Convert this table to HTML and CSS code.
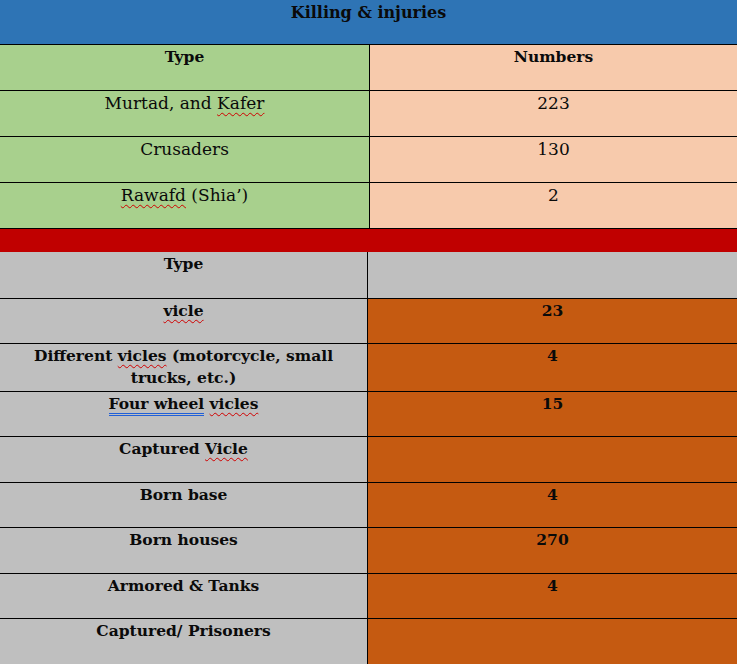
FILE: index.html
```html
<!DOCTYPE html>
<html lang="en">
<head>
<meta charset="utf-8">
<title>Killing &amp; injuries</title>
<link rel="stylesheet" href="styles.css">
</head>
<body>
<div class="sheet">
  <div class="title-row"><b>Killing &amp; injuries</b></div>

  <div class="grid top">
    <div class="cell green h45 bold">Type</div>
    <div class="cell peach h45 bold sep">Numbers</div>

    <div class="cell green h45">Murtad, and <span class="sp">Kafer</span></div>
    <div class="cell peach h45 sep">223</div>

    <div class="cell green h45">Crusaders</div>
    <div class="cell peach h45 sep">130</div>

    <div class="cell green h45"><span class="sp">Rawafd</span> (Shia’)</div>
    <div class="cell peach h45 sep">2</div>
  </div>

  <div class="red-band"></div>

  <div class="grid bottom bold">
    <div class="cell gray h46">Type</div>
    <div class="cell gray h46 sep"></div>

    <div class="cell gray h44"><span class="sp">vicle</span></div>
    <div class="cell orange h44 sep">23</div>

    <div class="cell gray h47">Different <span class="sp">vicles</span> (motorcycle, small<br>trucks, etc.)</div>
    <div class="cell orange h47 sep">4</div>

    <div class="cell gray h44"><span class="gr">Four wheel</span> <span class="sp">vicles</span></div>
    <div class="cell orange h44 sep">15</div>

    <div class="cell gray h45">Captured <span class="sp">Vicle</span></div>
    <div class="cell orange h45 sep"></div>

    <div class="cell gray h44">Born base</div>
    <div class="cell orange h44 sep">4</div>

    <div class="cell gray h45">Born houses</div>
    <div class="cell orange h45 sep">270</div>

    <div class="cell gray h44">Armored &amp; Tanks</div>
    <div class="cell orange h44 sep">4</div>

    <div class="cell gray h45 last">Captured/ Prisoners</div>
    <div class="cell orange h45 sep last"></div>
  </div>
</div>
</body>
</html>
```

FILE: styles.css
```css
html, body {
  margin: 0;
  padding: 0;
  background: #ffffff;
}

.sheet {
  width: 737px;
  height: 664px;
  overflow: hidden;
  font-family: "DejaVu Serif", "Liberation Serif", serif;
  font-size: 17px;
  line-height: 22px;
  color: #0a0a0a;
}

.title-row {
  height: 45px;
  box-sizing: border-box;
  padding-top: 1px;
  background: #2e74b5;
  border-bottom: 1px solid #000;
  text-align: center;
}

.grid {
  display: grid;
}

.top {
  grid-template-columns: 369px 1fr;
}

.bottom {
  grid-template-columns: 367px 1fr;
}

.bold,
.title-row b {
  font-weight: bold;
  font-size: 15.5px;
}

.title-row b {
  font-size: 16px;
}

.cell {
  text-align: center;
  padding-top: 1px;
  box-sizing: content-box;
  border-bottom: 1px solid #000;
}

.cell.last {
  border-bottom: none;
}

.sep {
  border-left: 1px solid #000;
}

.h44 { height: 43px; }
.h45 { height: 44px; }
.h46 { height: 45px; }
.h47 { height: 46px; }

.green  { background: #a8d08d; }
.peach  { background: #f7caac; }
.gray   { background: #bfbfbf; }
.orange { background: #c55a11; }

.red-band {
  height: 23px;
  background: #c00000;
}

.sp {
  text-decoration: underline wavy #d00000;
  text-decoration-thickness: 1px;
  text-underline-offset: 3px;
}

.gr {
  border-bottom: 3px double #1f5fd8;
}
```
